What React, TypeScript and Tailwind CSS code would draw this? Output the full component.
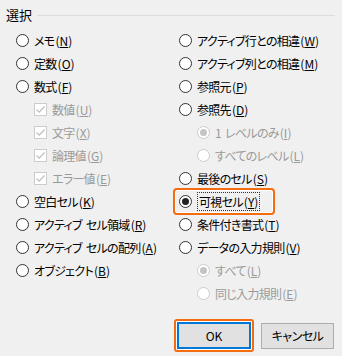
import type { ReactNode } from 'react'

type Item = {
  label: string
  key?: string
  kind?: 'radio' | 'check'
  indent?: boolean
  disabled?: boolean
  checked?: boolean
  focus?: boolean
}

const leftItems: Item[] = [
  { label: 'メモ', key: 'N' },
  { label: '定数', key: 'O' },
  { label: '数式', key: 'F' },
  { label: '数値', key: 'U', kind: 'check', indent: true, disabled: true, checked: true },
  { label: '文字', key: 'X', kind: 'check', indent: true, disabled: true, checked: true },
  { label: '論理値', key: 'G', kind: 'check', indent: true, disabled: true, checked: true },
  { label: 'エラー値', key: 'E', kind: 'check', indent: true, disabled: true, checked: true },
  { label: '空白セル', key: 'K' },
  { label: 'アクティブ セル領域', key: 'R' },
  { label: 'アクティブ セルの配列', key: 'A' },
  { label: 'オブジェクト', key: 'B' },
]

const rightItems: Item[] = [
  { label: 'アクティブ行との相違', key: 'W' },
  { label: 'アクティブ列との相違', key: 'M' },
  { label: '参照元', key: 'P' },
  { label: '参照先', key: 'D' },
  { label: '1 レベルのみ', key: 'I', indent: true, disabled: true, checked: true },
  { label: 'すべてのレベル', key: 'L', indent: true, disabled: true },
  { label: '最後のセル', key: 'S' },
  { label: '可視セル', key: 'Y', checked: true, focus: true },
  { label: '条件付き書式', key: 'T' },
  { label: 'データの入力規則', key: 'V' },
  { label: 'すべて', key: 'L', indent: true, disabled: true, checked: true },
  { label: '同じ入力規則', key: 'E', indent: true, disabled: true },
]

function Radio({ checked, disabled }: { checked?: boolean; disabled?: boolean }) {
  return (
    <span
      className={`flex h-[13px] w-[13px] shrink-0 items-center justify-center rounded-full border bg-white ${
        disabled ? 'border-[#cccccc]' : 'border-[#333333]'
      }`}
    >
      {checked && (
        <span className={`h-[7px] w-[7px] rounded-full ${disabled ? 'bg-[#c4c4c4]' : 'bg-[#222222]'}`} />
      )}
    </span>
  )
}

function Check({ disabled }: { disabled?: boolean }) {
  return (
    <span
      className={`flex h-[13px] w-[13px] shrink-0 items-center justify-center border bg-white ${
        disabled ? 'border-[#cccccc]' : 'border-[#333333]'
      }`}
    >
      <svg width="11" height="11" viewBox="0 0 11 11">
        <path d="M1.5 5.5 L4.2 8.2 L9.5 2.5" fill="none" stroke={disabled ? '#bdbdbd' : '#222'} strokeWidth="1.2" />
      </svg>
    </span>
  )
}

function Label({ item }: { item: Item }) {
  const body: ReactNode = (
    <>
      <span className="tracking-[-0.7px] [word-spacing:2px]">{item.label}</span>
      <span className="ml-[1px]">(</span>
      <span className="underline underline-offset-[1px]">{item.key}</span>)
    </>
  )
  if (item.focus) {
    return <span className="border border-dotted border-[#333333] px-[1px] leading-[17px]">{body}</span>
  }
  return <span>{body}</span>
}

function Row({ item }: { item: Item }) {
  return (
    <div className={`relative flex h-[23px] items-center gap-[5px] ${item.indent ? 'pl-[18px]' : ''}`}>
      {item.kind === 'check' ? (
        <Check disabled={item.disabled} />
      ) : (
        <Radio checked={item.checked} disabled={item.disabled} />
      )}
      <span className={item.disabled ? 'text-[#9a9a9a]' : 'text-black'}>
        <Label item={item} />
      </span>
      {item.focus && (
        <span className="pointer-events-none absolute left-[-6px] top-[-2px] h-[27px] w-[102px] rounded-[4px] border-[2px] border-[#f36c0f] shadow-[inset_0_0_0_1px_#ffffff]" />
      )}
    </div>
  )
}

export default function App() {
  return (
    <div
      className="h-[356px] w-[342px] overflow-hidden bg-[#f0f0f0] text-[12px] text-black [font-feature-settings:'palt']"
      style={{ fontFamily: '"Noto Sans CJK JP", "Noto Sans", sans-serif' }}
    >
      <div className="flex items-center pl-[6px] pr-[7px] pt-[5px]">
        <span className="text-[13px] leading-[20px]">選択</span>
        <div className="ml-[5px] h-px flex-1 bg-[#dcdcdc]" />
      </div>
      <div className="mt-[4px] grid grid-cols-[163px_1fr] pl-[16px]">
        <div className="flex flex-col">
          {leftItems.map((item) => (
            <Row key={item.label} item={item} />
          ))}
        </div>
        <div className="flex flex-col">
          {rightItems.map((item) => (
            <Row key={item.label} item={item} />
          ))}
        </div>
      </div>
      <div className="mt-[14px] flex justify-end gap-[7px] pr-[8px]">
        <div className="rounded-[3px] border-[2px] border-[#f36c0f] p-[1px] shadow-[inset_0_0_0_1px_#ffffff]">
          <button className="flex h-[27px] w-[74px] items-center justify-center border-[2px] border-[#0078d7] bg-[#e1e1e1] text-[12px]">
            OK
          </button>
        </div>
        <div className="pt-[4px]">
          <button className="flex h-[26px] w-[73px] items-center justify-center border border-[#adadad] bg-[#e1e1e1] text-[12px] tracking-[-0.5px]">
            キャンセル
          </button>
        </div>
      </div>
    </div>
  )
}
